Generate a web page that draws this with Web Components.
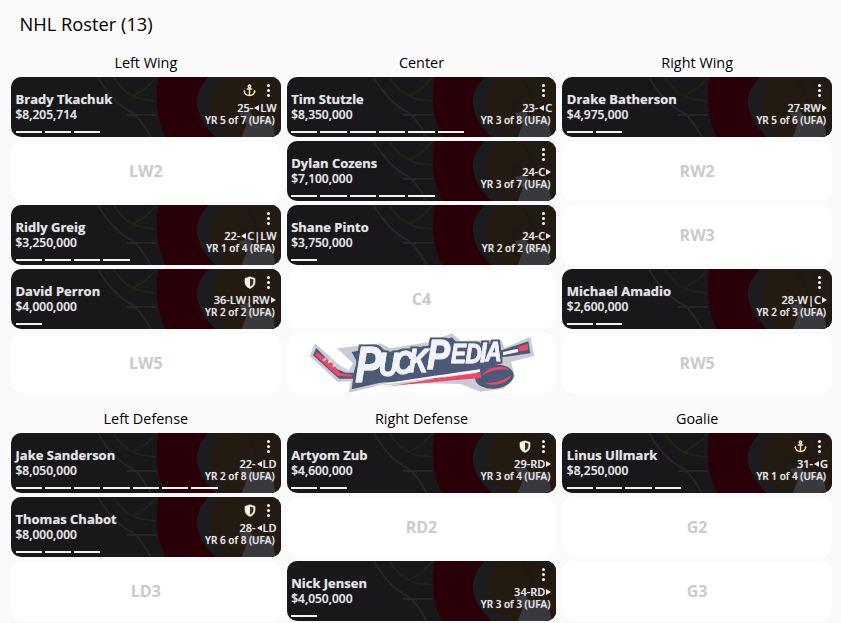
<!DOCTYPE html>
<html lang="en"><head><meta charset="utf-8"><title>NHL Roster</title>
<style>
html,body{margin:0;background:#fafafa;font-family:"Open Sans",sans-serif;overflow:hidden}
</style></head><body>
<roster-page heading="NHL Roster (13)">
  <roster-group>
    <roster-column label="Left Wing">
      <player-card name="Brady Tkachuk" salary="$8,205,714" age="25" pos="LW" arrow="l" yr="5" total="7" term="UFA" badge="anchor"></player-card>
      <empty-slot>LW2</empty-slot>
      <player-card name="Ridly Greig" salary="$3,250,000" age="22" pos="C|LW" arrow="l" yr="1" total="4" term="RFA"></player-card>
      <player-card name="David Perron" salary="$4,000,000" age="36" pos="LW|RW" arrow="r" yr="2" total="2" term="UFA" badge="shield"></player-card>
      <empty-slot>LW5</empty-slot>
    </roster-column>
    <roster-column label="Center">
      <player-card name="Tim Stutzle" salary="$8,350,000" age="23" pos="C" arrow="l" yr="3" total="8" term="UFA"></player-card>
      <player-card name="Dylan Cozens" salary="$7,100,000" age="24" pos="C" arrow="r" yr="3" total="7" term="UFA"></player-card>
      <player-card name="Shane Pinto" salary="$3,750,000" age="24" pos="C" arrow="r" yr="2" total="2" term="RFA"></player-card>
      <empty-slot>C4</empty-slot>
      <empty-slot><puck-logo></puck-logo></empty-slot>
    </roster-column>
    <roster-column label="Right Wing">
      <player-card name="Drake Batherson" salary="$4,975,000" age="27" pos="RW" arrow="r" yr="5" total="6" term="UFA"></player-card>
      <empty-slot>RW2</empty-slot>
      <empty-slot>RW3</empty-slot>
      <player-card name="Michael Amadio" salary="$2,600,000" age="28" pos="W|C" arrow="r" yr="2" total="3" term="UFA"></player-card>
      <empty-slot>RW5</empty-slot>
    </roster-column>
  </roster-group>
  <roster-group>
    <roster-column label="Left Defense">
      <player-card name="Jake Sanderson" salary="$8,050,000" age="22" pos="LD" arrow="l" yr="2" total="8" term="UFA"></player-card>
      <player-card name="Thomas Chabot" salary="$8,000,000" age="28" pos="LD" arrow="l" yr="6" total="8" term="UFA" badge="shield"></player-card>
      <empty-slot>LD3</empty-slot>
    </roster-column>
    <roster-column label="Right Defense">
      <player-card name="Artyom Zub" salary="$4,600,000" age="29" pos="RD" arrow="r" yr="3" total="4" term="UFA" badge="shield"></player-card>
      <empty-slot>RD2</empty-slot>
      <player-card name="Nick Jensen" salary="$4,050,000" age="34" pos="RD" arrow="r" yr="3" total="3" term="UFA"></player-card>
    </roster-column>
    <roster-column label="Goalie">
      <player-card name="Linus Ullmark" salary="$8,250,000" age="31" pos="G" arrow="l" yr="1" total="4" term="UFA" badge="anchor"></player-card>
      <empty-slot>G2</empty-slot>
      <empty-slot>G3</empty-slot>
    </roster-column>
  </roster-group>
</roster-page>
<script>
const def=(name,build)=>customElements.define(name,class extends HTMLElement{
  constructor(){super();this.attachShadow({mode:'open'})}
  connectedCallback(){this.shadowRoot.innerHTML=build(this)}
});
def('roster-page',el=>`<style>
:host{display:block;width:841px;height:623px;box-sizing:border-box;padding:13px 9px 0 11px;color:#000}
h1{margin:0 0 0 8.5px;font:400 18.3px/22px "Open Sans",sans-serif}
.g{display:flex;flex-direction:column;gap:15px;margin-top:17px}
</style><h1>${el.getAttribute('heading')}</h1><div class="g"><slot></slot></div>`);
def('roster-group',()=>`<style>
:host{display:grid;grid-template-columns:repeat(3,1fr);column-gap:6px}
</style><slot></slot>`);
def('roster-column',el=>`<style>
:host{display:flex;flex-direction:column;gap:4px;min-width:0}
h2{margin:0;font:500 14.4px/21px "Open Sans",sans-serif;text-align:center}
</style><h2>${el.getAttribute('label')}</h2><slot></slot>`);
def('empty-slot',()=>`<style>
:host{display:flex;align-items:center;justify-content:center;height:60px;border-radius:12px;background:#fff;color:#c8cacd;font:700 16px/20px "Open Sans",sans-serif}
</style><slot></slot>`);
const ICONS={
 anchor:`<svg width="13" height="13" viewBox="0 0 14 14" fill="none" stroke="#f5dfb5" stroke-width="1.6"><circle cx="7" cy="2.4" r="1.3"/><path d="M7 3.7V12.4M4.6 5.4H9.4M1.4 7.6C1.6 10.6 4.4 12.2 7 12.4C9.6 12.2 12.4 10.6 12.6 7.6" stroke-linecap="round"/><path d="M.4 8.6 1.4 6.8 2.8 8.6ZM13.6 8.6 12.6 6.8 11.2 8.6Z" fill="#f5dfb5" stroke="none"/></svg>`,
 shield:`<svg width="12" height="13" viewBox="0 0 12 13"><path d="M6 .8 11 2.4V6.2C11 9.2 9 11.4 6 12.4 3 11.4 1 9.2 1 6.2V2.4Z" fill="#fbf3e2" stroke="#fbf3e2" stroke-width=".6"/><path d="M6 2.4 9.4 3.5V6.2C9.4 8.2 8 9.8 6 10.7Z" fill="#3a3226"/></svg>`
};
const WATERMARK=`<svg class="wm" viewBox="0 0 270 60" preserveAspectRatio="none" aria-hidden="true">
<path d="M148 0C144 20 146 42 155 60H270V0Z" fill="#2a0008"/>
<path d="M198 0C184 14 178 34 205 60H270V0Z" fill="#1c1c1e"/>
<path d="M212 0C196 14 192 36 218 60H262C268 52 270 40 270 30V6C255 1 235 0 212 0Z" fill="#231b11"/>
<path d="M228 36 238 33 243 40 254 39 261 41 265 60H231L236 47Z" fill="#38383d"/>
<g fill="none" stroke="#1a1a1c" stroke-width="1.2"><circle cx="231" cy="30" r="5"/><path d="M236 4C244 12 248 22 244 36M252 6C256 16 258 26 254 38"/></g>
<g fill="none" stroke-width="2">
<path d="M87 0C96 16 106 28 122 36C130 42 134 50 140 60" stroke="#262629"/>
<path d="M103 0C108 10 118 19 130 22L146 24" stroke="#232018"/>
<path d="M146 0C140 8 132 14 122 19" stroke="#232018"/>
<path d="M116 38H146" stroke="#262629"/>
</g></svg>`;
def('player-card',el=>{
 const a=k=>el.getAttribute(k)||'';
 const n=(+a('total'))-(+a('yr'))+1;
 const tri=d=>`<i class="t t${d}"></i>`;
 const posline=a('arrow')==='l'?`${a('age')}-${tri('l')}${a('pos')}`:`${a('age')}-${a('pos')}${tri('r')}`;
 return `<style>
:host{display:block;position:relative;height:60px;border-radius:10px;overflow:hidden;background:#18181a;color:#e4e4e6;font-family:"Open Sans",sans-serif}
.wm{position:absolute;inset:0;width:100%;height:100%}
.box{position:relative;display:flex;justify-content:space-between;height:100%;text-shadow:0 0 1px rgba(230,230,232,.55)}
.left{display:flex;flex-direction:column;padding:14px 0 0 4.5px}
.name{font:700 13px/16px "Open Sans",sans-serif;white-space:nowrap}
.sal{font:600 12px/16px "Open Sans",sans-serif;white-space:nowrap}
.bars{position:absolute;left:4.5px;bottom:4px;display:flex;gap:3px}
.bars b{display:block;width:26.3px;height:2px;background:#f1f1f1}
.right{display:flex;flex-direction:column;align-items:flex-end;padding:4px 4px 0 0;white-space:nowrap}
.top{display:flex;align-items:center;gap:11px;height:18px;margin-bottom:2px}
.badge{display:flex}
.kebab{display:flex;flex-direction:column;gap:2px;width:3px;margin-right:7px}
.kebab u{display:block;width:3px;height:3px;border-radius:50%;background:#f4f4f4}
.pos{display:flex;align-items:center;font:600 11px/13px "Open Sans",sans-serif}
.term{margin-right:2px;font:600 10px/13px "Open Sans",sans-serif}
.t{display:block;flex:none;width:0;height:0;border-style:solid;border-width:3px 0;border-color:transparent;margin:0 1px}
.tl{border-right:5px solid #e4e4e6}.tr{border-left:5px solid #e4e4e6}
</style>${WATERMARK}<div class="box">
<div class="left"><span class="name">${a('name')}</span><span class="sal">${a('salary')}</span></div>
<div class="right"><div class="top">${a('badge')?`<span class="badge">${ICONS[a('badge')]}</span>`:''}<span class="kebab"><u></u><u></u><u></u></span></div>
<div class="pos">${posline}</div><div class="term">YR ${a('yr')} of ${a('total')} (${a('term')})</div></div>
</div><div class="bars">${'<b></b>'.repeat(n)}</div>`;
});
def('puck-logo',()=>`<style>:host{display:block;width:100%;height:100%;align-self:stretch;flex:1}
svg{display:block;width:100%;height:100%;overflow:visible}</style>
<svg viewBox="21 39 807 180" role="img" aria-label="PuckPedia logo">
<defs><filter id="outline" x="-10%" y="-20%" width="120%" height="140%"><feMorphology in="SourceAlpha" operator="dilate" radius="6" result="d"/><feFlood flood-color="#4b5a78"/><feComposite in2="d" operator="in" result="n"/><feMerge><feMergeNode in="n"/><feMergeNode in="SourceGraphic"/></feMerge></filter></defs>
<path d="M104 70 88 108 172 186 212 184 205 218 300 196 430 190 540 192 600 215 670 206 704 170 692 125 762 108 750 50 672 84 664 60 540 62 515 40 450 65 330 85 300 70 170 85 218 130 205 152 176 134Z" fill="#c9ccd3"/>
<path d="M108 84 98 106 176 176 222 176 226 158 196 158 168 146Z" fill="#4b5a78"/>
<path d="M110 96 104 106 172 168 216 170 218 164 180 160 160 134Z" fill="#ee4767"/>
<path d="M130 122 136 116M144 128 150 122M158 140 164 134" stroke="#fff" stroke-width="5"/>
<path d="M660 92 744 64 750 100 664 112Z" fill="#4b5a78"/>
<path d="M668 96 712 86 714 96 668 106Z" fill="#f4f4f6"/><path d="M714 80 742 72 744 90 716 94Z" fill="#ee4767"/>
<path d="M214 96 296 80 322 96 452 76 514 52 534 72 656 72 664 130 600 148 470 176 300 188 214 208 222 150 232 130Z" fill="#4b5a78"/>
<ellipse cx="642" cy="170" rx="58" ry="36" fill="#4b5a78" transform="rotate(-6 642 170)"/>
<path d="M270 198C340 186 430 172 598 148L600 156C500 170 400 184 270 198Z" fill="#f4f4f6"/>
<path d="M290 202C380 192 480 172 600 158L604 174C500 182 400 192 290 202Z" fill="#ee4767"/>
<path d="M606 166C620 136 684 134 684 150 660 146 630 150 606 166ZM612 188C640 192 680 180 692 164 692 182 650 206 612 188Z" fill="#ee4767"/>
<g filter="url(#outline)"><text transform="matrix(.8 0 0 1 0 0)" fill="#f2f3f6" stroke="#f2f3f6" stroke-width="3" stroke-linejoin="round" font-family="Liberation Sans,sans-serif" font-weight="700" font-style="italic" font-size="100"><tspan x="281" y="186" font-size="150">P</tspan><tspan x="369 425 482" y="168 162 156">UCK</tspan><tspan x="550" y="148" font-size="130">P</tspan><tspan x="640 694 750 769" y="130 128 126 124" font-size="84">EDIA</tspan></text></g>
</svg>`);
</script>
</body></html>
